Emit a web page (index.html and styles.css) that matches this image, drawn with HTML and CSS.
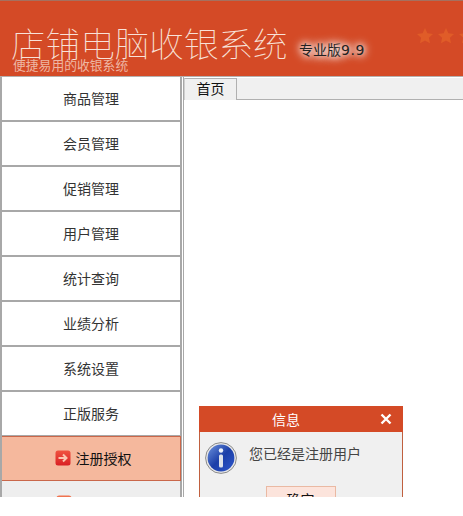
FILE: index.html
```html
<!DOCTYPE html>
<html lang="zh-CN">
<head>
  <meta charset="UTF-8" />
  <title>店铺电脑收银系统</title>
  <link rel="stylesheet" href="styles.css">
</head>
<body>
  <div class="app">
    <div class="header">
      <div class="brand">
        <div class="brand-name">店铺电脑收银系统</div>
        <div class="brand-sub">便捷易用的收银系统</div>
      </div>
      <div class="version">专业版<span class="version-num">9.9</span></div>
      <div class="stars">
        <svg viewBox="0 0 18 18" width="18" height="18"><path d="M9 1l2.4 5.2 5.6.7-4.1 3.8 1.1 5.6L9 13.5l-5 2.8 1.1-5.6L1 6.9l5.6-.7z"/></svg>
        <svg viewBox="0 0 18 18" width="18" height="18"><path d="M9 1l2.4 5.2 5.6.7-4.1 3.8 1.1 5.6L9 13.5l-5 2.8 1.1-5.6L1 6.9l5.6-.7z"/></svg>
        <svg viewBox="0 0 18 18" width="18" height="18"><path d="M9 1l2.4 5.2 5.6.7-4.1 3.8 1.1 5.6L9 13.5l-5 2.8 1.1-5.6L1 6.9l5.6-.7z"/></svg>
      </div>
    </div>
    <div class="main">
      <div class="sidebar">
        <div class="menu-item">商品管理</div>
        <div class="menu-item">会员管理</div>
        <div class="menu-item">促销管理</div>
        <div class="menu-item">用户管理</div>
        <div class="menu-item">统计查询</div>
        <div class="menu-item">业绩分析</div>
        <div class="menu-item">系统设置</div>
        <div class="menu-item">正版服务</div>
        <div class="menu-item active">
          <svg class="arrow-icon" viewBox="0 0 16 16" width="16" height="16">
            <defs>
              <linearGradient id="arrowRed" x1="0" y1="0" x2="0" y2="1">
                <stop offset="0" stop-color="#f0533f"/>
                <stop offset="1" stop-color="#d91f24"/>
              </linearGradient>
            </defs>
            <rect x="0.5" y="0.5" width="15" height="15" rx="2.5" fill="url(#arrowRed)"/>
            <path d="M3.5 8h8M8 4.5L11.5 8 8 11.5" fill="none" stroke="#fbc4ae" stroke-width="2"/>
          </svg>
          注册授权
        </div>
        <div class="menu-item disabled">
          <svg class="arrow-icon" viewBox="0 0 16 16" width="16" height="16">
            <rect x="0.5" y="0.5" width="15" height="15" rx="2.5" fill="#f0734f"/>
          </svg>
        </div>
      </div>
      <div class="content">
        <div class="tabs">
          <div class="tab">首页</div>
        </div>
      </div>
    </div>
    <div class="dialog">
      <div class="dialog-title">
        <span>信息</span>
        <svg class="dialog-close" viewBox="0 0 12 12" width="12" height="12">
          <path d="M1.5 1.5l9 9M10.5 1.5l-9 9" fill="none" stroke="#fff" stroke-width="2.4"/>
        </svg>
      </div>
      <div class="dialog-body">
        <svg class="info-icon" viewBox="0 0 32 32" width="32" height="32">
          <defs>
            <linearGradient id="infoBlue" x1="0" y1="0" x2="1" y2="1">
              <stop offset="0" stop-color="#6f94de"/>
              <stop offset="0.5" stop-color="#1c3fa8"/>
              <stop offset="1" stop-color="#2f58cc"/>
            </linearGradient>
          </defs>
          <circle cx="16" cy="16" r="15.4" fill="#e8e8e8" stroke="#8b8b8b" stroke-width="1"/>
          <circle cx="16" cy="16" r="13.4" fill="url(#infoBlue)"/>
          <circle cx="16" cy="8.5" r="2.2" fill="#eef2fa"/>
          <rect x="14" y="12.5" width="4" height="13" rx="1.5" fill="#dfe3ea"/>
        </svg>
        <div class="dialog-text">您已经是注册用户</div>
      </div>
      <div class="dialog-actions">
        <button class="dialog-btn">确定</button>
      </div>
    </div>
  </div>
</body>
</html>
```

FILE: styles.css
```css
html, body {
  margin: 0;
  padding: 0;
  background: #fff;
  font-family: "Noto Sans CJK SC", "Liberation Sans", sans-serif;
}
.app {
  position: relative;
  width: 463px;
  height: 497px;
  overflow: hidden;
  background: #fff;
}
.header {
  display: flex;
  box-sizing: border-box;
  height: 77px;
  padding-left: 11px;
  border-top: 1px solid #a5705f;
  border-bottom: 1px solid #b5b0ae;
  background: #d44a26;
}
.brand {
  width: 288px;
  flex-shrink: 0;
  padding-top: 23px;
}
.brand-name {
  height: 35px;
  font-size: 34.6px;
  line-height: 36px;
  color: #f8e2d9;
  font-weight: 100;
  white-space: nowrap;
}
.brand-sub {
  margin-left: 2px;
  font-size: 12.8px;
  line-height: 12px;
  color: #eeb6a3;
  white-space: nowrap;
}
.version {
  margin-top: 39px;
  font-size: 14px;
  line-height: 18px;
  color: #222;
  white-space: nowrap;
  text-shadow: 0 0 6px #fff, 0 0 10px #fff, 0 0 12px #fff;
}
.version-num {
  font-family: "DejaVu Sans", sans-serif;
  letter-spacing: 0.6px;
}
.stars {
  display: flex;
  gap: 3px;
  margin: 26px 0 0 51px;
  flex-shrink: 0;
}
.stars svg {
  fill: #e05c28;
  flex-shrink: 0;
}
.main {
  display: flex;
  height: 420px;
}
.sidebar {
  width: 182px;
  box-sizing: border-box;
  border-left: 2px solid #a8a8a8;
  border-right: 2px solid #a8a8a8;
  flex-shrink: 0;
}
.menu-item {
  display: flex;
  align-items: center;
  justify-content: center;
  gap: 5px;
  height: 45px;
  box-sizing: border-box;
  padding-bottom: 2px;
  border-bottom: 2px solid #a8a8a8;
  background: #fff;
  font-size: 14px;
  color: #333;
}
.menu-item.active {
  margin: -1px -1px 0 0;
  padding: 0 0 1px 4px;
  border-top: 1px solid #c9674a;
  border-bottom: 1px solid #c9674a;
  border-right: 1px solid #c9674a;
  background: #f5b89d;
  color: #111;
}
.menu-item.disabled {
  align-items: flex-start;
  justify-content: flex-start;
  padding: 14px 0 0 54px;
  border-bottom: 0;
  background: #eeeeee;
}
.arrow-icon {
  flex-shrink: 0;
}
.content {
  flex: 1;
  margin-left: 1px;
  border-left: 1px solid #a8a8a8;
}
.tabs {
  display: flex;
  height: 21px;
  margin-top: 1px;
  border-bottom: 1px solid #b0b0b0;
  background: #f0f0f0;
}
.tab {
  width: 53px;
  height: 22px;
  box-sizing: border-box;
  border: 1px solid #b0b0b0;
  border-bottom: 0;
  border-left-color: #d0d0d0;
  background: #f0f0f0;
  font-size: 14px;
  line-height: 18px;
  text-align: center;
  color: #111;
}
.dialog {
  position: absolute;
  left: 199px;
  top: 406px;
  width: 204px;
  height: 130px;
  box-sizing: border-box;
  border-left: 1px solid #c0603f;
  border-right: 1px solid #c0603f;
  background: #f0f0f0;
}
.dialog-title {
  display: flex;
  align-items: center;
  position: relative;
  height: 26px;
  margin: 0 -1px;
  padding: 0 0 1px 73px;
  box-sizing: border-box;
  background: #d44a26;
  font-size: 14px;
  color: #fff;
}
.dialog-close {
  position: absolute;
  right: 11px;
  top: 7px;
}
.dialog-body {
  display: flex;
  align-items: center;
  gap: 12px;
  padding: 10px 0 0 5px;
}
.info-icon {
  flex-shrink: 0;
}
.dialog-text {
  margin-top: -10px;
  font-size: 14px;
  color: #444;
  white-space: nowrap;
}
.dialog-actions {
  display: flex;
  justify-content: center;
  margin-top: 12px;
}
.dialog-btn {
  width: 70px;
  height: 26px;
  padding: 0;
  margin-left: -1px;
  border: 1px solid #eab9a3;
  background: #fce4dc;
  font-family: inherit;
  font-size: 14px;
  color: #111;
}
```
